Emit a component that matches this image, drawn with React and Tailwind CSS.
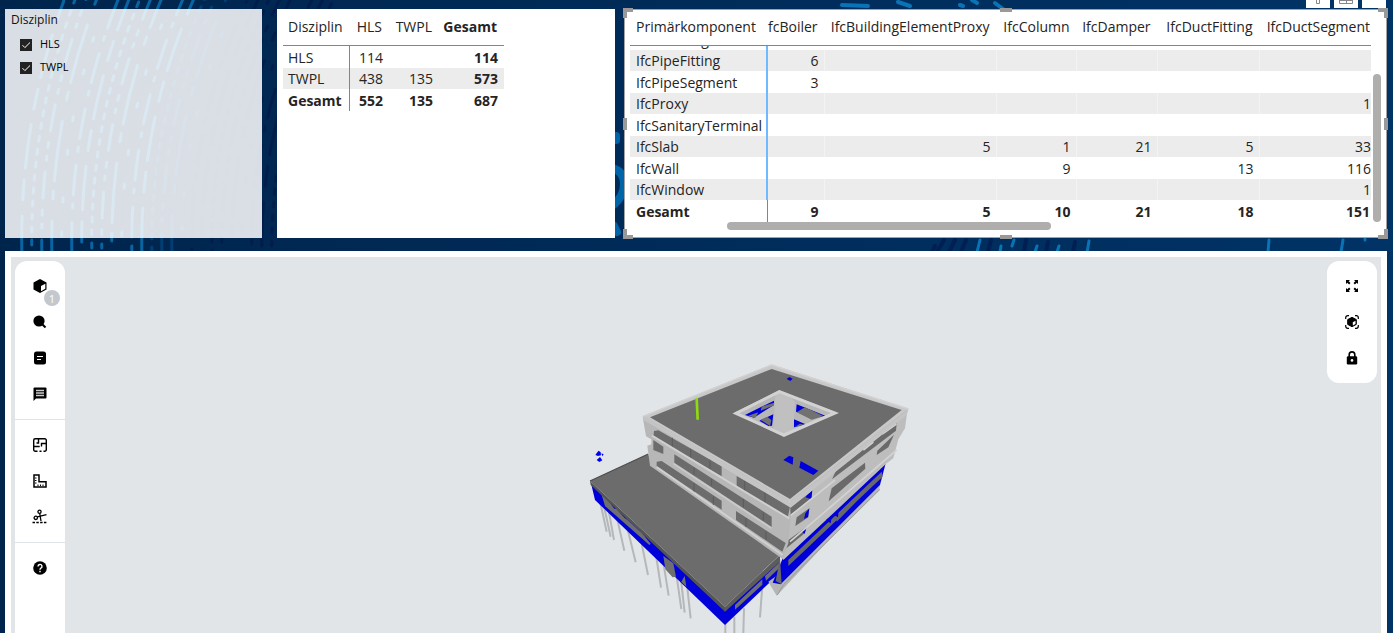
import { useState } from "react";

const DISCIPLINES = ["HLS", "TWPL"];

const SUMMARY = [
  { name: "HLS", values: ["114", "", "114"] },
  { name: "TWPL", values: ["438", "135", "573"] },
];

const COMPONENT_HEADERS = [
  "fcBoiler",
  "IfcBuildingElementProxy",
  "IfcColumn",
  "IfcDamper",
  "IfcDuctFitting",
  "IfcDuctSegment",
];

const COMPONENTS = [
  { name: "IfcPipeFitting", values: ["6", "", "", "", "", ""] },
  { name: "IfcPipeSegment", values: ["3", "", "", "", "", ""] },
  { name: "IfcProxy", values: ["", "", "", "", "", "1"] },
  { name: "IfcSanitaryTerminal", values: ["", "", "", "", "", ""] },
  { name: "IfcSlab", values: ["", "5", "1", "21", "5", "33"] },
  { name: "IfcWall", values: ["", "", "9", "", "13", "116"] },
  { name: "IfcWindow", values: ["", "", "", "", "", "1"] },
];

const COMPONENT_TOTALS = ["9", "5", "10", "21", "18", "151"];

// Curved dashed streaks behind the top row of visuals
const DASHES = ["26 12 4 9 5 12", "5 8", "44 16 20 12", "4 9 30 14", "4 30 4 44", "60 22 8 10"];
const STREAKS = Array.from({ length: 26 }, (_, i) => ({
  x: 22 + i * 10,
  dash: DASHES[(i * 5 + 2) % 6],
  offset: (i * 37) % 90,
  color: i < 13 ? "#0a6cab" : i < 17 ? "#024f8c" : "#00184a",
  opacity: i < 13 ? 0.9 : 0.6,
}));

function Backdrop() {
  return (
    <svg className="absolute inset-0 h-full w-full" aria-hidden="true">
      <g fill="none" strokeLinecap="round">
        {STREAKS.map((s) => (
          <path
            key={s.x}
            d={`M${s.x} 260Q${s.x - 4} 120 ${s.x + 44 + s.x / 12} -10`}
            stroke={s.color}
            strokeWidth="3"
            strokeDasharray={s.dash}
            strokeDashoffset={s.offset}
            opacity={s.opacity}
          />
        ))}
        <g stroke="#0a73b5" strokeWidth="4">
          <path d="M842 5l26 1M898 2l12 4M963 6l-3-1M972 0l5 3M995 3l8 6" />
          <path d="M612 168q12 3 12 16t-12 22M616 136v4M614 226l3 6" strokeWidth="8" stroke="#0064a8" />
          <path d="M980 240l-3 12M1001 246l-1 6M1014 240l-2 6M1037 246l-2 6M1059 246l-2 6M1089 241l-2 12M1269 240l-1 12M1343 240l-2 12M1365 239v1" strokeWidth="3" />
        </g>
        <path
          d="M935 246l-3 6M944 240l-7 12M955 240l-6 12M966 240l-5 12M991 240l-3 12M1026 240l-2 12M1048 242l-2 10M1075 242l-2 10"
          stroke="#001f52"
          strokeWidth="4"
        />
      </g>
    </svg>
  );
}

function SlicerItem({ label }) {
  const [checked, setChecked] = useState(true);
  return (
    <label className="flex h-[23px] items-center gap-2 text-[11px] text-black">
      <span className="grid">
        <input
          type="checkbox"
          checked={checked}
          onChange={() => setChecked(!checked)}
          className="col-start-1 row-start-1 size-3 appearance-none border border-[#222] checked:bg-[#222]"
        />
        {checked && (
          <svg viewBox="0 0 12 12" className="pointer-events-none col-start-1 row-start-1 size-3" fill="none">
            <path d="M2.5 6.2l2.4 2.4L10 3.5" stroke="#fff" />
          </svg>
        )}
      </span>
      {label}
    </label>
  );
}

function Slicer() {
  return (
    <section className="w-[257px] shrink-0 bg-white/85 px-1.5 pt-0.5">
      <h2 className="text-xs leading-[18px] text-[#111]">Disziplin</h2>
      <div className="flex flex-col pt-1 pl-[9px]">
        {DISCIPLINES.map((d) => (
          <SlicerItem key={d} label={d} />
        ))}
      </div>
    </section>
  );
}

function SummaryMatrix() {
  return (
    <section className="w-[338px] shrink-0 bg-white px-1.5 pt-1.5">
      <table className="w-[221px] table-fixed border-separate border-spacing-0 text-sm leading-5">
        <colgroup>
          <col className="w-[67px]" />
          <col className="w-[39px]" />
          <col className="w-[50px]" />
          <col />
        </colgroup>
        <thead>
          <tr className="h-[31px] align-top">
            <th className="border-b border-[#3a96f0] pt-0.5 pl-[5px] text-left font-normal">Disziplin</th>
            <th className="border-b border-[#3a96f0] pt-0.5 pr-[7px] text-right font-normal">HLS</th>
            <th className="border-b border-[#3a96f0] pt-0.5 pr-[7px] text-right font-normal">TWPL</th>
            <th className="border-b border-[#3a96f0] pt-0.5 pr-[7px] text-right font-bold">Gesamt</th>
          </tr>
        </thead>
        <tbody>
          {SUMMARY.map((row) => (
            <tr key={row.name} className="h-[22px] even:h-[21px] even:bg-[#ececec]">
              <th className="border-r border-[#3a96f0] p-0 pt-px pl-[5px] text-left font-normal">{row.name}</th>
              {row.values.map((v, i) => (
                <td key={i} className="p-0 pt-px pr-1.5 text-right last:font-bold">
                  {v}
                </td>
              ))}
            </tr>
          ))}
        </tbody>
        <tfoot>
          <tr className="h-[22px] font-bold">
            <th className="border-r border-[#3a96f0] p-0 pt-px pl-[5px] text-left">Gesamt</th>
            <td className="p-0 pt-px pr-1.5 text-right">552</td>
            <td className="p-0 pt-px pr-1.5 text-right">135</td>
            <td className="p-0 pt-px pr-1.5 text-right">687</td>
          </tr>
        </tfoot>
      </table>
    </section>
  );
}

function SelectionHandles() {
  return (
    <div className="pointer-events-none absolute -inset-0.5">
      <span className="absolute top-0 left-0 size-2.5 border-t-4 border-l-4 border-[#999]" />
      <span className="absolute top-0 right-0 size-2.5 border-t-4 border-r-4 border-[#999]" />
      <span className="absolute bottom-0 left-0 size-2.5 border-b-4 border-l-4 border-[#999]" />
      <span className="absolute right-0 bottom-0 size-2.5 border-r-4 border-b-4 border-[#999]" />
      <span className="absolute top-0 left-1/2 h-1 w-3 -translate-x-1/2 bg-[#999]" />
      <span className="absolute bottom-0 left-1/2 h-1 w-3 -translate-x-1/2 bg-[#999]" />
      <span className="absolute top-1/2 left-0 h-3 w-1 -translate-y-1/2 bg-[#999]" />
      <span className="absolute top-1/2 right-0 h-3 w-1 -translate-y-1/2 bg-[#999]" />
    </div>
  );
}

function VisualActions() {
  return (
    <div className="absolute right-0 bottom-full mb-0.5 flex h-2 gap-1 overflow-hidden">
      <button aria-label="Filter" className="flex w-6 justify-center bg-white">
        <svg viewBox="0 0 16 8" className="h-2 w-4" fill="none" stroke="#888">
          <path d="M6.500 0v3.500h3V0" />
        </svg>
      </button>
      <button aria-label="Fokusmodus" className="flex w-6 justify-center bg-white">
        <svg viewBox="0 0 16 8" className="h-2 w-4" fill="none" stroke="#888">
          <path d="M1.500 0v3.500h13V0M8.500 0v3.500M1.500 0.500h13" />
        </svg>
      </button>
      <button aria-label="Weitere Optionen" className="w-6 bg-white" />
    </div>
  );
}

function ComponentMatrix() {
  return (
    <section className="relative min-w-0 flex-1 border border-[#a3a3a3] bg-white pt-[5px] pl-[5px]">
      <VisualActions />
      <div className="flex">
        <table className="min-w-0 flex-1 table-fixed border-separate border-spacing-0 text-sm leading-5">
          <colgroup>
            <col className="w-[138px]" />
            <col className="w-14" />
            <col className="w-[172px]" />
            <col className="w-20" />
            <col className="w-[81px]" />
            <col className="w-[102px]" />
            <col />
          </colgroup>
          <thead>
            <tr className="h-[31px] align-top">
              <th className="border-b border-[#3a96f0] pt-0.5 pl-1.5 text-left font-normal">Primärkomponent</th>
              {COMPONENT_HEADERS.map((h) => (
                <th
                  key={h}
                  className="border-b border-[#3a96f0] pt-0.5 pr-[7px] text-right font-normal whitespace-nowrap last:pr-px"
                >
                  {h}
                </th>
              ))}
            </tr>
          </thead>
          <tbody>
            <tr>
              <th className="border-r-2 border-[#70b8ff] p-0 pl-1.5 text-left font-normal">
                <div className="flex h-1 items-end overflow-hidden">IfcCovering</div>
              </th>
              <td colSpan={6} className="p-0" />
            </tr>
            {COMPONENTS.map((row) => (
              <tr key={row.name} className="h-[22px] even:h-[21px] even:bg-[#ececec]">
                <th className="border-r-2 border-[#70b8ff] p-0 pt-px pl-1.5 text-left font-normal">{row.name}</th>
                {row.values.map((v, i) => (
                  <td key={i} className="border-r border-r-white/40 p-0 pt-px pr-[5px] text-right last:border-r-0 last:pr-0">
                    {v}
                  </td>
                ))}
              </tr>
            ))}
          </tbody>
          <tfoot>
            <tr className="h-[22px] font-bold">
              <th className="border-r border-[#3a96f0] p-0 pt-px pl-1.5 text-left">Gesamt</th>
              {COMPONENT_TOTALS.map((v, i) => (
                <td key={i} className="p-0 pt-px pr-1.5 text-right last:pr-px">
                  {v}
                </td>
              ))}
            </tr>
          </tfoot>
        </table>
        <div className="w-[15px] shrink-0 pt-[59px] pl-0.5">
          <div className="h-[148px] w-2 rounded-full bg-[#b0aeac]" />
        </div>
      </div>
      <div className="pl-[97px]">
        <div className="h-2 w-[324px] rounded-full bg-[#b0aeac]" />
      </div>
      <SelectionHandles />
    </section>
  );
}

function ToolButton({ label, badge, children }) {
  return (
    <button aria-label={label} className="relative flex h-9 w-full items-center justify-center text-black">
      <svg viewBox="0 0 16 16" className="size-4" fill="currentColor">
        {children}
      </svg>
      {badge && (
        <span className="absolute top-[22px] left-[29px] flex size-4 items-center justify-center rounded-full bg-[#c2c8ce] text-[11px] leading-none text-white">
          {badge}
        </span>
      )}
    </button>
  );
}

function LeftTools() {
  return (
    <aside className="w-[50px] shrink-0 self-stretch rounded-t-xl bg-white">
      <div className="py-[7px]">
        <ToolButton label="Modelle" badge="1">
          <path d="M8 1l6.500 3.500v7L8 15l-6.500-3.500v-7z" />
          <path d="M9 8l4.300-2.300v5L9 13.200z" fill="#fff" />
        </ToolButton>
        <ToolButton label="Suche">
          <circle cx="7" cy="7" r="5.600" />
          <path d="M10 10l3.500 3.500" stroke="currentColor" strokeWidth="2" />
        </ToolButton>
        <ToolButton label="Eigenschaften">
          <rect x="2" y="1.500" width="12" height="13" rx="2.500" />
          <path d="M5 6.500h6M5 9.500h4" stroke="#fff" strokeWidth="1.200" />
        </ToolButton>
        <ToolButton label="Kommentare">
          <path d="M2.500 1.500h11a1 1 0 0 1 1 1v9a1 1 0 0 1-1 1H4l-2.500 2.500V2.500a1 1 0 0 1 1-1z" />
          <path d="M4 4.500h8M4 7h8M4 9.500h8" stroke="#ccc" strokeWidth="1.300" />
        </ToolButton>
      </div>
      <div className="border-y border-[#e1e4e7] py-[7px]">
        <ToolButton label="Grundriss">
          <g fill="none" stroke="currentColor" strokeWidth="1.400">
            <path d="M5.500 14.300H3.200A1.500 1.500 0 0 1 1.700 12.800V3.200A1.500 1.500 0 0 1 3.200 1.700h9.600A1.500 1.500 0 0 1 14.300 3.200v9.600a1.500 1.500 0 0 1-1.500 1.500H11.500M9.500 14.300H7.500" />
            <path d="M1.700 9.500h6M6.500 1.700v4.300H4.500M14.300 6.500H9.500v3" />
          </g>
        </ToolButton>
        <ToolButton label="Messen">
          <path d="M2 2h5v6.800h7V14H2z" fill="none" stroke="currentColor" strokeWidth="1.500" />
          <path d="M3 5h1.500M3 7.500h1.500M3 10h1.500M6 13v-1.500M8.500 13v-1.500M11 13v-1.500" stroke="currentColor" />
        </ToolButton>
        <ToolButton label="Schnitt">
          <g fill="none" stroke="currentColor" strokeWidth="1.300">
            <circle cx="7.500" cy="2.800" r="1.600" />
            <circle cx="3.800" cy="8.800" r="1.700" />
            <path d="M7.700 4.400l1.300 7.600M5.300 7.900l9.200-2.200" />
            <path d="M.5 13.500h15" strokeDasharray="2.500 1.300" />
          </g>
        </ToolButton>
      </div>
      <div className="py-[7px]">
        <ToolButton label="Hilfe">
          <circle cx="8" cy="8" r="6.800" />
          <path d="M6 6.400a2 2 0 1 1 2.900 1.800q-.9.500-.9 1.500M8 10.800v1.400" fill="none" stroke="#fff" strokeWidth="1.400" />
        </ToolButton>
      </div>
    </aside>
  );
}

function RightTools() {
  return (
    <aside className="w-[50px] shrink-0 self-start rounded-xl bg-white py-[7px]">
      <ToolButton label="Vollbild">
        <path d="M2 2h4L4.700 3.300 6.500 5.100 5.100 6.500 3.300 4.700 2 6zM14 2v4l-1.300-1.300-1.800 1.800-1.400-1.400 1.800-1.800L10 2zM2 14v-4l1.300 1.300 1.800-1.800 1.400 1.400-1.800 1.800L6 14zM14 14h-4l1.300-1.300-1.800-1.800 1.400-1.400 1.800 1.800L14 10z" />
      </ToolButton>
      <ToolButton label="Modell zentrieren">
        <path
          d="M1.700 5V3.700a2 2 0 0 1 2-2H5M11 1.700h1.300a2 2 0 0 1 2 2V5M14.300 11v1.300a2 2 0 0 1-2 2H11M5 14.300H3.700a2 2 0 0 1-2-2V11"
          fill="none"
          stroke="currentColor"
          strokeWidth="1.200"
        />
        <path d="M8 3.300l4.300 2.300v4.800L8 12.700l-4.300-2.300V5.600z" stroke="currentColor" strokeLinejoin="round" />
        <path d="M8.800 8.200l2.700-1.500v3.200l-2.700 1.500z" fill="#fff" />
      </ToolButton>
      <ToolButton label="Sperren">
        <path d="M5.200 7V4.700a2.800 2.800 0 0 1 5.600 0V7" fill="none" stroke="currentColor" strokeWidth="1.600" />
        <rect x="2.800" y="6.300" width="10.400" height="8.200" rx="1.300" />
        <circle cx="8" cy="10.400" r="1.300" fill="#fff" />
      </ToolButton>
    </aside>
  );
}

function BuildingModel() {
  return (
    <svg viewBox="65 261 1262 372" preserveAspectRatio="xMidYMin slice" className="h-full min-w-0 flex-1" role="img" aria-label="Gebäudemodell">
      {/* piles and lower wing */}
      <g transform="translate(580 430) scale(.33333)">
        <g stroke="#b5b7b9" strokeWidth="6">
          <path d="M57 200l23 105M70 220l22 100M84 230l18 100M108 250l25 112M140 285l27 112M182 325l22 110M228 375l15 98M248 385l18 112M288 425l16 112M302 440l12 108M320 455l12 110M436 570v40M463 560v50M492 535l-2 75M546 480l-6 82" />
        </g>
        <path d="M33 160L45 210L435 585L600 428V385L435 535z" fill="#0000d8" />
        <path d="M65 195l10 3 28 38 6 0 25 28 10 7 32 30 8 6 28 34-4 4L75 228zM250 378l30 22 8 40-10 2-22-24zM304 455l10-17 5 32z" fill="#6f6f6f" />
        <path d="M465 525l82-77v16l-82 75zM555 438l45-42v16l-42 40z" fill="#6f6f6f" />
        <path d="M30 153L435 530V545L32 165z" fill="#555" />
        <path d="M435 530L600 375V395L435 545z" fill="#5c5c5c" />
        <path d="M30 153L205 72L215 105L605 370L435 530z" fill="#6c6c6c" />
        <path d="M30 153L205 72" stroke="#4d4d4d" strokeWidth="4" />
        <path d="M46 75l6-8 4-5 6 5 1 9-9 2zM64 70l7 3-4 6zM50 90l10-9 7 10-9 5z" fill="#0000f0" />
      </g>
      {/* right facade */}
      <g transform="translate(740 400) scale(.33333)">
        <path d="M85 545L120 520L122 553L420 255L418 270L300 385L110 587z" fill="#b4b6b6" />
        <path d="M112 585L130 555L420 268" stroke="#999" strokeWidth="3" fill="none" />
        <path d="M130 470L437 190L420 255L122 553L98 548z" fill="#0000d8" />
        <path d="M145 480L230 400L425 215L428 230L145 498zM290 355L420 225L415 238L290 365zM120 475l5 78-18-10z" fill="#686868" />
        <path d="M150 298L503 26L495 85L475 118L460 175L440 190L130 480L120 450L145 355z" fill="#bdbdbd" />
        <path d="M150 322L216 272L214 297L150 350zM288 212L470 70L468 92L276 238zM275 265L375 188L376 206L266 304zM412 152L462 104L445 142L410 165zM170 352L208 325L205 352L166 378zM140 424L200 380L194 400L130 452z" fill="#6a6a6a" />
        <path d="M200 287l17-16-3 27-17-6zM196 340l12-15-4 26-12 6zM185 395l15-14-6 20zM258 360l18-14-4 24zM282 345l14-15-2 22z" fill="#0000d8" />
        <path d="M370 150l30-24M427 102l42-30M150 348L285 240M150 425L275 318L470 150" stroke="#d2d2d2" strokeWidth="5" fill="none" />
      </g>
      {/* left facade */}
      <g transform="translate(640 405) scale(.33333)">
        <path d="M8 35L22 28L450 292L452 335L445 415L428 462L30 182L22 122L34 118V103L18 94z" fill="#b7b7b7" />
        <path
          d="M42 78L55 76L245 183V214L40 96zM290 213L450 305L443 338L290 243zM40 105L70 125V147L40 135zM103 148L395 335V366L103 173zM50 170L65 168L245 287V314L50 184zM288 318L437 414L427 440L288 345z"
          fill="#6c6c6c"
        />
        <path d="M97 98v28M152 132v25M210 163v28M314 228v30M375 262v34M162 188v22M215 222v20M310 282v25M370 322v24M162 235v26M220 275v25M318 340v26M378 380v24" stroke="#5b5b5b" strokeWidth="3" />
        <path d="M36 92L288 244L448 340M50 186L428 450M10 35L450 296" stroke="#d0d0d0" strokeWidth="6" fill="none" />
        <path d="M100 176L288 300L395 370" stroke="#cacaca" strokeWidth="5" fill="none" />
      </g>
      {/* roof and atrium */}
      <g transform="translate(630 355) scale(.33333)">
        <path d="M40 184L425 30L835 162L480 440z" fill="#c8c8c8" stroke="#bfbfbf" strokeWidth="3" />
        <path d="M60 187L425 42L815 165L480 432z" fill="#6c6c6c" />
        <path d="M479 438v18M40 184L425 30L835 162" stroke="#d2d2d2" strokeWidth="4" fill="none" />
        <path d="M480 442L835 164L830 180L482 458L40 194V184z" fill="#c4c4c4" />
        <path d="M196 130l8-1 3 65h-8z" fill="#8edb12" />
        <path d="M470 72l8-6 10 5-7 7zM460 315l18-13 12 5-2 22zM512 318l53 29-15 13-42-22z" fill="#0000d8" />
        <path d="M312 174L448 106L622 173L462 246z" fill="#b7b7b7" />
        <path d="M345 180L432 137V150L372 188zM388 197L430 178L426 212L415 213zM500 148L586 182L570 187L498 170zM492 193L527 208L492 217z" fill="#0000d8" />
        <path d="M355 182l30-10-9 16zM395 155l37-12v8l-40 16zM392 195l20-10 12 10-4 18zM500 172l25-15 55 26-15 5-20 6zM495 215l15-9 14 4z" fill="#717171" />
        <path d="M436 118L465 112L495 140L490 225L462 236L430 222z" fill="#c0c0c0" />
        <path d="M318 175L448 110L615 174L462 240z" fill="none" stroke="#d2d2d2" strokeWidth="9" />
      </g>
    </svg>
  );
}

function ModelViewer() {
  return (
    <main className="min-h-0 flex-1 bg-white px-1.5 pt-1.5">
      <div className="flex h-full bg-[#e1e5e8] px-1 pt-1">
        <LeftTools />
        <BuildingModel />
        <RightTools />
      </div>
    </main>
  );
}

export default function App() {
  return (
    <div className="relative h-screen overflow-hidden bg-linear-to-r from-[#00254d] to-[#003366] font-['Open_Sans',sans-serif] text-[#252423]">
      <Backdrop />
      <div className="relative flex h-full flex-col gap-[13px] pt-[9px] pr-1.5 pl-[5px]">
        <div className="flex h-[229px] shrink-0">
          <Slicer />
          <div className="w-[15px] shrink-0" />
          <SummaryMatrix />
          <div className="w-[9px] shrink-0" />
          <ComponentMatrix />
        </div>
        <ModelViewer />
      </div>
    </div>
  );
}
